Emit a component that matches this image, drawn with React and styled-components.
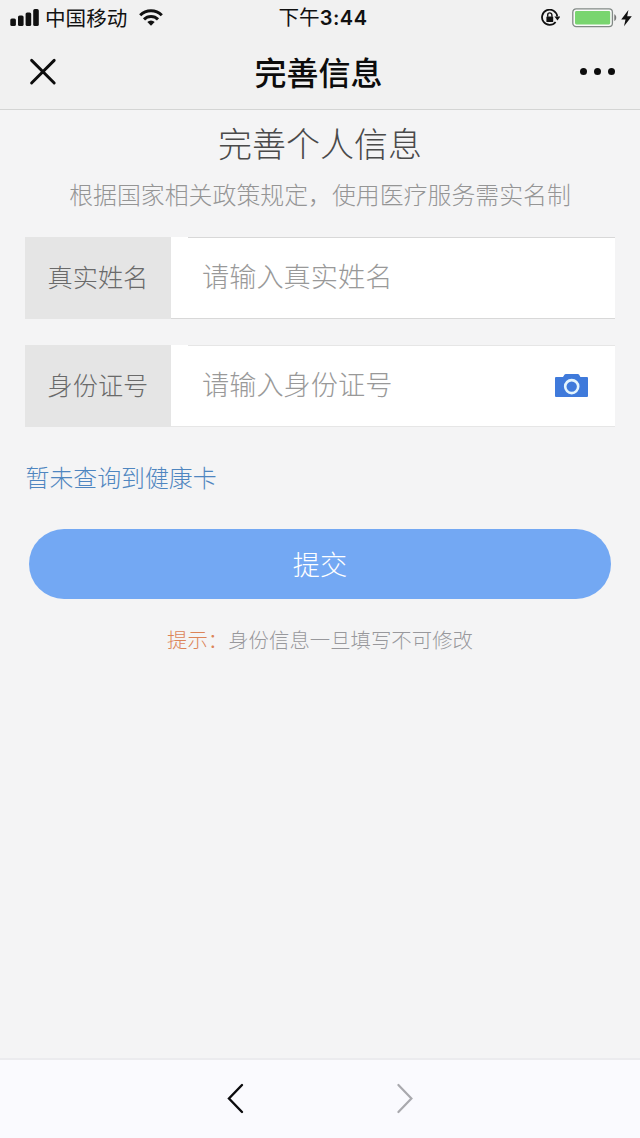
import React, { useState } from "react";
import styled, { createGlobalStyle } from "styled-components";

const App = () => {
    const [name, setName] = useState("");
    const [idNumber, setIdNumber] = useState("");
    return (
        <Page>
            <GlobalStyle />
            <StatusBar>
                <Carrier>
                    <SignalIcon />
                    <CarrierName>中国移动</CarrierName>
                    <WifiIcon />
                </Carrier>
                <Time>下午<b>3:44</b></Time>
                <Power>
                    <LockIcon />
                    <BatteryIcon />
                    <BoltIcon />
                </Power>
            </StatusBar>
            <Navbar>
                <CloseIcon />
                <NavTitle>完善信息</NavTitle>
                <Dots>
                    <span />
                    <span />
                    <span />
                </Dots>
            </Navbar>
            <Content>
                <Heading>完善个人信息</Heading>
                <SubHeading>根据国家相关政策规定，使用医疗服务需实名制</SubHeading>
                <Field>
                    <Label>真实姓名</Label>
                    <InputBox>
                        <Input placeholder="请输入真实姓名" value={name} onChange={(e) => setName(e.target.value)} />
                    </InputBox>
                </Field>
                <Field>
                    <Label>身份证号</Label>
                    <InputBox $light>
                        <Input placeholder="请输入身份证号" value={idNumber} onChange={(e) => setIdNumber(e.target.value)} />
                        <CameraIcon />
                    </InputBox>
                </Field>
                <CardLink>暂未查询到健康卡</CardLink>
                <Submit>提交</Submit>
                <Tip><TipLabel>提示：</TipLabel>身份信息一旦填写不可修改</Tip>
            </Content>
            <BottomBar>
                <svg width="20" height="32" viewBox="0 0 20 32" fill="none" stroke="#0b0b0e" strokeWidth="2.4" strokeLinecap="round">
                    <path d="M16 3L3 16.5L16 30" />
                </svg>
                <svg width="20" height="32" viewBox="0 0 20 32" fill="none" stroke="#a9a9ae" strokeWidth="2.2" strokeLinecap="round">
                    <path d="M3.4 3L16.4 16.5L3.4 30" />
                </svg>
            </BottomBar>
        </Page>
    );
};

const SignalIcon = () => (
    <svg width="30" height="18" viewBox="0 0 30 18" fill="#111">
        <rect x="0.3" y="9.5" width="5.6" height="7.6" rx="1.6" />
        <rect x="8" y="6.5" width="5.6" height="10.6" rx="1.6" />
        <rect x="15.6" y="3.5" width="5.6" height="13.6" rx="1.6" />
        <rect x="23.2" y="0.1" width="5.6" height="17" rx="1.6" />
    </svg>
);

const WifiIcon = () => (
    <svg width="24" height="18" viewBox="0 0 24 18" fill="none" stroke="#111" strokeWidth="3">
        <path d="M1.2 6.2A15.3 15.3 0 0 1 22.8 6.2" />
        <path d="M5 10.4A9.9 9.9 0 0 1 19 10.4" />
        <path d="M12 16.8L8.3 13.1A5.3 5.3 0 0 1 15.7 13.1Z" fill="#111" stroke="none" />
    </svg>
);

const LockIcon = () => (
    <svg width="20" height="18" viewBox="0 0 20 18" fill="none" stroke="#111">
        <path d="M15.6 13A7.6 7.6 0 1 1 17.2 7.4" strokeWidth="1.8" />
        <path d="M14.4 7.4H20.4L17.5 11.4Z" fill="#111" stroke="none" />
        <rect x="6.4" y="7.4" width="6.8" height="5.6" rx="0.6" fill="#111" stroke="none" />
        <path d="M7.7 7.8V6A2.1 2.1 0 0 1 11.9 6V7.8" strokeWidth="1.4" />
    </svg>
);

const BatteryIcon = () => (
    <svg width="45" height="20" viewBox="0 0 45 20">
        <rect x="0.8" y="0.8" width="39.6" height="17.8" rx="3.4" fill="#fafafa" stroke="#828a86" strokeWidth="1.3" />
        <rect x="3" y="3" width="35.2" height="13.4" rx="1.4" fill="#79d56f" />
        <path d="M42.3 6.3C44.9 7.5 44.9 11.9 42.3 13.1Z" fill="#777" />
    </svg>
);

const BoltIcon = () => (
    <svg width="11" height="17" viewBox="0 0 11 17" fill="#111">
        <path d="M7.4 0L0.2 9.4H4.5L3 16.2L10.8 6.2H6.2Z" />
    </svg>
);

const CloseIcon = () => (
    <svg width="28" height="28" viewBox="0 0 28 28" fill="none" stroke="#0c0c0c" strokeWidth="2.9" strokeLinecap="round">
        <path d="M2.6 2.4L25.2 25M25.2 2.4L2.6 25" />
    </svg>
);

const CameraIcon = () => (
    <svg width="33" height="24" viewBox="0 0 33 24">
        <path d="M1 3H8L9.6 0.5Q10 0 10.8 0H22.8Q23.6 0 24 0.5L25.4 3H32Q33 3 33 4V22Q33 23 32 23H1Q0 23 0 22V4Q0 3 1 3Z" fill="#3f7adb" />
        <circle cx="16.7" cy="12.6" r="6.5" fill="#3f7adb" stroke="#e4f5fd" strokeWidth="2.6" />
    </svg>
);

const GlobalStyle = createGlobalStyle`
* {
    box-sizing: border-box;
}

body {
    margin: 0;
    background: #f4f4f4;
    font-family: "Liberation Sans", "Noto Sans CJK SC", sans-serif;
}
`

const Page = styled.div`
display: flex;
flex-direction: column;
width: 640px;
height: 1138px;
background: #f4f4f5;
overflow: hidden;
`

const StatusBar = styled.div`
display: grid;
grid-template-columns: 1fr auto 1fr;
align-items: center;
height: 35px;
padding: 0 8px 0 10px;
background: #f1f1f1;
color: #111;
font-size: 20.6px;
line-height: 35px;
`

const Carrier = styled.div`
display: flex;
align-items: center;
`

const CarrierName = styled.span`
margin: 0 12px 0 5px;
`

const Time = styled.div`
margin-left: 4px;

b {
    font-family: Inter, sans-serif;
    font-size: 20px;
    font-weight: 600;
    letter-spacing: 0.5px;
}
`

const Power = styled.div`
display: flex;
justify-content: flex-end;
align-items: center;

svg:nth-child(2) {
    margin: 0 4px 0 12px;
}
`

const Navbar = styled.div`
display: flex;
justify-content: space-between;
align-items: center;
height: 75px;
padding: 0 25px 0 29px;
background: #f1f1f1;
border-bottom: 1px solid #d4d5d4;
`

const NavTitle = styled.h1`
margin: 0;
padding-top: 3px;
color: #0c0c0c;
font-size: 32px;
font-weight: 500;
line-height: 48px;
`

const Dots = styled.div`
display: flex;
gap: 7px;
padding-bottom: 2px;

span {
    width: 7px;
    height: 7px;
    border-radius: 50%;
    background: #0c0c0c;
}
`

const Content = styled.div`
flex: 1;
display: flex;
flex-direction: column;
padding: 9px 25px 0;
font-weight: 300;
`

const Heading = styled.h2`
margin: 0;
color: #4a4a4a;
font-size: 34px;
font-weight: 300;
line-height: 52px;
text-align: center;
`

const SubHeading = styled.p`
margin: 6px 0 23px;
color: #959595;
font-size: 23.9px;
line-height: 37px;
text-align: center;
white-space: nowrap;
`

const Field = styled.div`
display: flex;
height: 82px;
margin-bottom: 26px;
`

const Label = styled.label`
flex: none;
width: 146px;
padding-left: 22.5px;
background: #e5e5e5;
color: #6a6a6a;
font-size: 25.2px;
line-height: 83px;
`

/* the top line starts a little to the right of the label */
const InputBox = styled.div`
flex: 1;
display: flex;
align-items: center;
min-width: 0;
padding: 1px 27px 0 31px;
background: linear-gradient(${({ $light }) => ($light ? "#e6e6e6, #e6e6e6" : "#d8d8d8, #d8d8d8")}) 17px 0 / 100% 1px no-repeat white;
border-bottom: 1px solid ${({ $light }) => ($light ? "#e6e6e6" : "#d8d8d8")};

svg {
    flex: none;
}
`

const Input = styled.input`
flex: 1;
min-width: 0;
height: 60px;
padding: 0;
border: none;
outline: none;
background: none;
color: #4a4a4a;
font-family: inherit;
font-size: 27.2px;
font-weight: 300;

&::placeholder {
    color: #999;
    opacity: 1;
}
`

const CardLink = styled.a`
margin-top: 7px;
padding-left: 0.5px;
color: #4f86c0;
font-size: 23.9px;
line-height: 38px;
cursor: pointer;
`

const Submit = styled.button`
height: 70px;
margin: 31px 4px 0;
padding: 0 0 3px;
border: none;
border-radius: 35px;
background: #73a8f3;
color: white;
font-family: inherit;
font-size: 27.2px;
font-weight: 300;
cursor: pointer;
`

const Tip = styled.p`
margin: 26px 0 0;
color: #98989c;
font-size: 20.4px;
line-height: 32px;
text-align: center;
`

const TipLabel = styled.span`
color: #dc8458;
`

const BottomBar = styled.div`
display: flex;
justify-content: center;
gap: 149px;
height: 80px;
padding-top: 22px;
background: #fafafe;
border-top: 2px solid #ebebee;
`

export default App;
